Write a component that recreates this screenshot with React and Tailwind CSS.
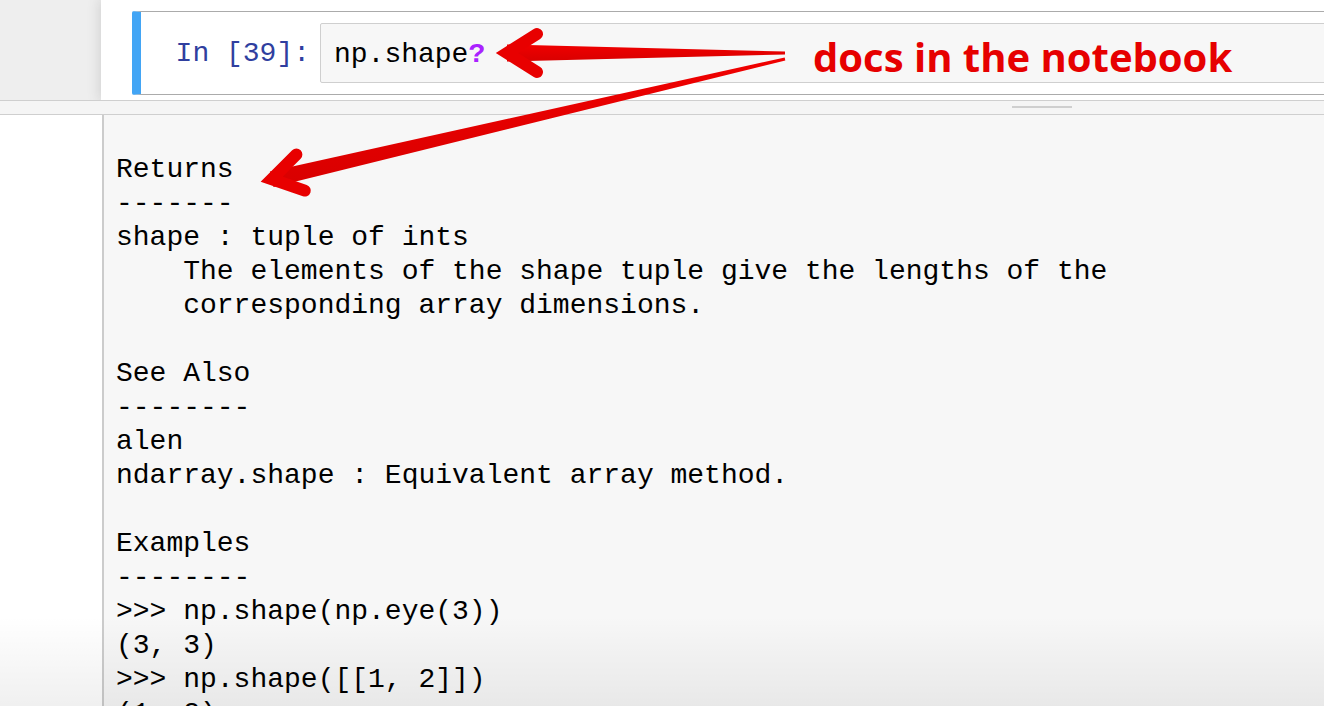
import React from 'react';

const mono = { fontFamily: '"Liberation Mono", "Courier New", monospace' };

const docLines = [
  'Returns',
  '-------',
  'shape : tuple of ints',
  '    The elements of the shape tuple give the lengths of the',
  '    corresponding array dimensions.',
  '',
  'See Also',
  '--------',
  'alen',
  'ndarray.shape : Equivalent array method.',
  '',
  'Examples',
  '--------',
  '>>> np.shape(np.eye(3))',
  '(3, 3)',
  '>>> np.shape([[1, 2]])',
  '(1, 2)',
];

const Arrows = () => (
  <svg className="pointer-events-none absolute left-0 top-0" width="1324" height="706" viewBox="0 0 1324 706">
    <defs>
      <linearGradient id="red" x1="0" y1="0" x2="0" y2="1">
        <stop offset="0" stopColor="#f00000" />
        <stop offset="1" stopColor="#d80000" />
      </linearGradient>
    </defs>
    {/* arrow to the input */}
    <polygon points="507,44.5 785,51.5 785,54.5 507,61.5" fill="url(#red)" />
    <polyline
      points="537,34 507,53 537,72"
      fill="none"
      stroke="#e80000"
      strokeWidth="12"
      strokeLinecap="round"
      strokeLinejoin="miter"
    />
    {/* arrow to the pager */}
    <polygon points="269.9,171.5 784.7,57.5 785.3,60.5 273.5,187.1" fill="url(#red)" />
    <polyline
      points="296.4,154.6 271.7,179.3 304.8,190.6"
      fill="none"
      stroke="#e80000"
      strokeWidth="12"
      strokeLinecap="round"
      strokeLinejoin="miter"
    />
  </svg>
);

export default function App() {
  return (
    <div className="relative h-[706px] w-full overflow-hidden bg-[#f7f7f7]">
      {/* notebook cell */}
      <div className="flex h-[100px]">
        <div className="w-[101px] bg-[#eeeeee]" />
        <div className="flex-1 bg-white pl-[31px] pt-[11px] shadow-[0_0_12px_1px_rgba(87,87,87,0.2)]">
          <div className="-mr-4 flex h-[84px] rounded-[2px] border border-l-[9px] border-[#ababab] border-l-[#42a5f5] py-[11px]">
            <div className="w-[179px] pr-[10px] text-right text-[28px] leading-[62px] text-[#303f9f]" style={mono}>
              In [39]:
            </div>
            <div
              className="h-[60px] flex-1 rounded-[2px] border border-[#cfcfcf] bg-[#f7f7f7] pl-[13px] text-[28px] leading-[62px] text-black"
              style={mono}
            >
              np.shape<span className="font-bold text-[#aa22ff]">?</span>
            </div>
          </div>
        </div>
      </div>

      {/* pager divider */}
      <div className="relative h-[15px] border-y border-[#cfcfcf] bg-[#f5f5f5]">
        <div className="ml-[1012px] mt-[5px] h-[2px] w-[60px] bg-[#cfcfcf]" />
      </div>

      {/* pager body */}
      <div className="flex h-[591px]">
        <div className="w-[104px] shrink-0 border-r-2 border-[#cccccc] bg-white" />
        <pre className="m-0 pl-[12px] pt-[38px] text-[28px] leading-[34px] text-black" style={mono}>
          {docLines.join('\n')}
        </pre>
      </div>

      <div className="pointer-events-none absolute bottom-0 left-0 h-[90px] w-full bg-gradient-to-b from-transparent to-black/[0.06]" />

      <Arrows />
      <div
        className="pointer-events-none absolute left-[813px] top-[37px] text-[40px] font-bold leading-none text-[#e60000]"
        style={{ fontFamily: '"Open Sans", sans-serif' }}
      >
        docs in the notebook
      </div>
    </div>
  );
}
